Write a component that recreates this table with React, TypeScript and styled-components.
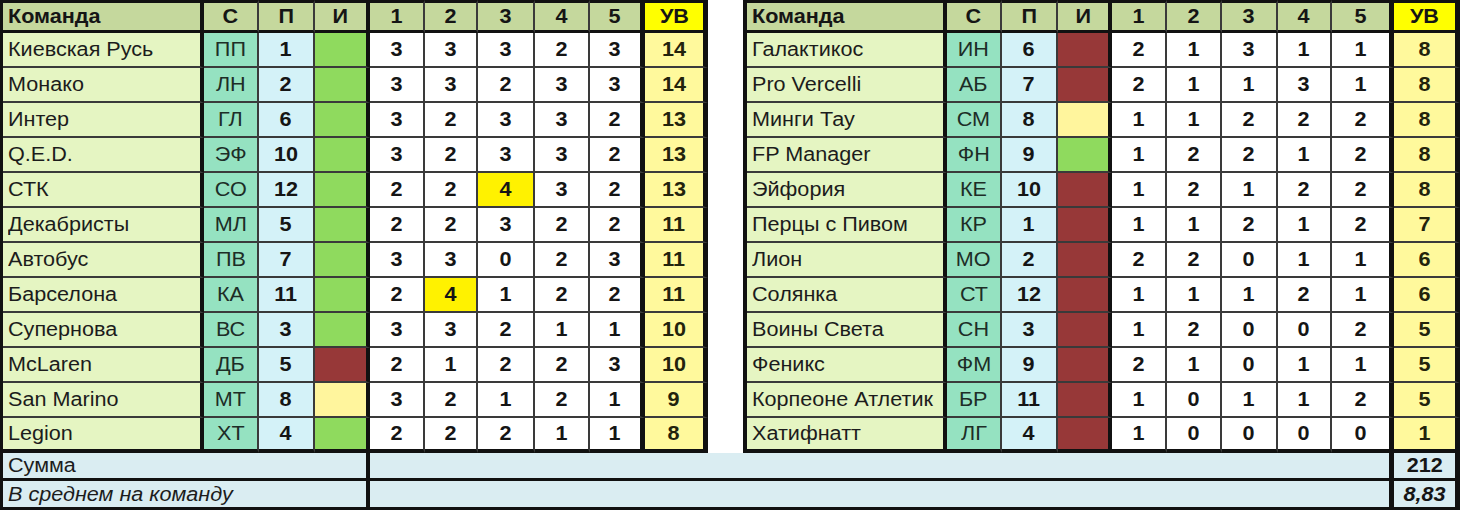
import React from "react";
import styled, { createGlobalStyle } from "styled-components";

const GlobalStyle = createGlobalStyle`
  html, body { margin: 0; padding: 0; background: #ffffff; }
  body { font-family: "Liberation Sans", Arial, sans-serif; }
`;

const THICK = "#111111";
const THIN = "#3a3a3a";

const COLS = [201, 55, 56, 55, 55, 53, 57, 55, 55, 63, 39, 200, 55, 56, 54, 55, 55, 56, 54, 62, 66];
const RB = [4, 2, 2, 4, 2, 2, 2, 2, 5, 5, 4, 4, 2, 2, 4, 2, 2, 2, 2, 5, 5];

type Status = "g" | "r" | "y";
type Team = { name: string; code: string; place: number; status: Status; scores: number[]; hl?: number };

const LEFT: Team[] = [
  { name: "Киевская Русь", code: "ПП", place: 1, status: "g", scores: [3, 3, 3, 2, 3] },
  { name: "Монако", code: "ЛН", place: 2, status: "g", scores: [3, 3, 2, 3, 3] },
  { name: "Интер", code: "ГЛ", place: 6, status: "g", scores: [3, 2, 3, 3, 2] },
  { name: "Q.E.D.", code: "ЭФ", place: 10, status: "g", scores: [3, 2, 3, 3, 2] },
  { name: "СТК", code: "СО", place: 12, status: "g", scores: [2, 2, 4, 3, 2], hl: 2 },
  { name: "Декабристы", code: "МЛ", place: 5, status: "g", scores: [2, 2, 3, 2, 2] },
  { name: "Автобус", code: "ПВ", place: 7, status: "g", scores: [3, 3, 0, 2, 3] },
  { name: "Барселона", code: "КА", place: 11, status: "g", scores: [2, 4, 1, 2, 2], hl: 1 },
  { name: "Супернова", code: "ВС", place: 3, status: "g", scores: [3, 3, 2, 1, 1] },
  { name: "McLaren", code: "ДБ", place: 5, status: "r", scores: [2, 1, 2, 2, 3] },
  { name: "San Marino", code: "МТ", place: 8, status: "y", scores: [3, 2, 1, 2, 1] },
  { name: "Legion", code: "ХТ", place: 4, status: "g", scores: [2, 2, 2, 1, 1] },
];

const RIGHT: Team[] = [
  { name: "Галактикос", code: "ИН", place: 6, status: "r", scores: [2, 1, 3, 1, 1] },
  { name: "Pro Vercelli", code: "АБ", place: 7, status: "r", scores: [2, 1, 1, 3, 1] },
  { name: "Минги Тау", code: "СМ", place: 8, status: "y", scores: [1, 1, 2, 2, 2] },
  { name: "FP Manager", code: "ФН", place: 9, status: "g", scores: [1, 2, 2, 1, 2] },
  { name: "Эйфория", code: "КЕ", place: 10, status: "r", scores: [1, 2, 1, 2, 2] },
  { name: "Перцы с Пивом", code: "КР", place: 1, status: "r", scores: [1, 1, 2, 1, 2] },
  { name: "Лион", code: "МО", place: 2, status: "r", scores: [2, 2, 0, 1, 1] },
  { name: "Солянка", code: "СТ", place: 12, status: "r", scores: [1, 1, 1, 2, 1] },
  { name: "Воины Света", code: "СН", place: 3, status: "r", scores: [1, 2, 0, 0, 2] },
  { name: "Феникс", code: "ФМ", place: 9, status: "r", scores: [2, 1, 0, 1, 1] },
  { name: "Корпеоне Атлетик", code: "БР", place: 11, status: "r", scores: [1, 0, 1, 1, 2] },
  { name: "Хатифнатт", code: "ЛГ", place: 4, status: "r", scores: [1, 0, 0, 0, 0] },
];

const STATUS_BG: Record<Status, string> = { g: "#8fda5e", r: "#973838", y: "#fff59d" };

const Sheet = styled.div`
  width: 1460px;
  height: 510px;
  box-sizing: border-box;
  border-left: 3px solid ${THICK};
  display: grid;
  grid-template-columns: ${COLS.map((c) => `${c}px`).join(" ")};
  grid-template-rows: 33px repeat(12, 35px) 28px 29px;
  overflow: hidden;
`;

const Base = styled.div<{ $r: number; $b: number; $t?: number }>`
  box-sizing: border-box;
  display: flex;
  align-items: center;
  justify-content: center;
  overflow: hidden;
  white-space: nowrap;
  color: #151515;
  font-size: 20px;
  border-right: ${(p) => p.$r}px solid ${(p) => (p.$r > 2 ? THICK : THIN)};
  border-bottom: ${(p) => p.$b}px solid ${(p) => (p.$b > 2 ? THICK : THIN)};
  border-top: ${(p) => p.$t ?? 0}px solid ${THICK};
`;

const Txt = styled.span<{ $origin?: string }>`
  display: inline-block;
  transform: scaleX(1.08);
  transform-origin: ${(p) => p.$origin ?? "center"};
`;

const HeadCell = styled(Base)<{ $yellow?: boolean; $left?: boolean }>`
  background: ${(p) => (p.$yellow ? "#ffff00" : "#c5d89d")};
  font-weight: bold;
  justify-content: ${(p) => (p.$left ? "flex-start" : "center")};
  padding-left: ${(p) => (p.$left ? "5px" : "0")};
`;

const Gap = styled(Base)`
  background: #ffffff;
`;

const NameCell = styled(Base)`
  background: #e5f5c2;
  justify-content: flex-start;
  padding-left: 5px;
  color: #1c1c1c;
`;

const CodeCell = styled(Base)`
  background: #95e2c1;
  color: #1d2d27;
`;

const PlaceCell = styled(Base)`
  background: #d4f2f8;
  font-weight: bold;
`;

const StatusCell = styled(Base)<{ $status: Status }>`
  background: ${(p) => STATUS_BG[p.$status]};
`;

const ScoreCell = styled(Base)<{ $hl?: boolean }>`
  background: ${(p) => (p.$hl ? "#fff200" : "#ffffff")};
  font-weight: bold;
`;

const TotalCell = styled(Base)`
  background: #fff99c;
  font-weight: bold;
  color: #23230c;
`;

const SummaryLabel = styled(Base)<{ $italic?: boolean }>`
  grid-column: span 4;
  background: #daedf2;
  justify-content: flex-start;
  padding-left: 5px;
  font-style: ${(p) => (p.$italic ? "italic" : "normal")};
  color: #1c1c1c;
`;

const SummaryFill = styled(Base)`
  grid-column: span 16;
  background: #daedf2;
`;

const SummaryValue = styled(Base)<{ $italic?: boolean }>`
  background: #daedf2;
  font-weight: bold;
  font-style: ${(p) => (p.$italic ? "italic" : "normal")};
`;

const HEAD = ["Команда", "С", "П", "И", "1", "2", "3", "4", "5", "УВ"];

function headCells(offset: number) {
  return HEAD.map((h, i) => (
    <HeadCell key={`h${offset}-${i}`} $r={RB[offset + i]} $b={3} $t={3} $yellow={h === "УВ"} $left={i === 0}>
      <Txt $origin={i === 0 ? "left" : "center"}>{h}</Txt>
    </HeadCell>
  ));
}

function teamCells(t: Team, offset: number, b: number, key: string) {
  const cells: React.ReactNode[] = [];
  cells.push(
    <NameCell key={`${key}n`} $r={RB[offset]} $b={b}>
      <Txt $origin="left">{t.name}</Txt>
    </NameCell>
  );
  cells.push(
    <CodeCell key={`${key}c`} $r={RB[offset + 1]} $b={b}>
      <Txt>{t.code}</Txt>
    </CodeCell>
  );
  cells.push(
    <PlaceCell key={`${key}p`} $r={RB[offset + 2]} $b={b}>
      <Txt>{t.place}</Txt>
    </PlaceCell>
  );
  cells.push(<StatusCell key={`${key}s`} $r={RB[offset + 3]} $b={b} $status={t.status} />);
  t.scores.forEach((s, i) => {
    cells.push(
      <ScoreCell key={`${key}x${i}`} $r={RB[offset + 4 + i]} $b={b} $hl={t.hl === i}>
        <Txt>{s}</Txt>
      </ScoreCell>
    );
  });
  const total = t.scores.reduce((a, v) => a + v, 0);
  cells.push(
    <TotalCell key={`${key}t`} $r={RB[offset + 9]} $b={b}>
      <Txt>{total}</Txt>
    </TotalCell>
  );
  return cells;
}

export default function App() {
  const all = [...LEFT, ...RIGHT];
  const sum = all.reduce((a, t) => a + t.scores.reduce((x, y) => x + y, 0), 0);
  const avg = (sum / all.length).toFixed(2).replace(".", ",");

  return (
    <>
      <GlobalStyle />
      <Sheet>
        {headCells(0)}
        <Gap $r={RB[10]} $b={0} />
        {headCells(11)}
        {LEFT.map((t, r) => {
          const b = r === LEFT.length - 1 ? 4 : 2;
          return (
            <React.Fragment key={`row${r}`}>
              {teamCells(t, 0, b, `l${r}`)}
              <Gap $r={RB[10]} $b={0} />
              {teamCells(RIGHT[r], 11, b, `r${r}`)}
            </React.Fragment>
          );
        })}
        <SummaryLabel $r={4} $b={3}>
          <Txt $origin="left">Сумма</Txt>
        </SummaryLabel>
        <SummaryFill $r={5} $b={3} />
        <SummaryValue $r={5} $b={3}>
          <Txt>{sum}</Txt>
        </SummaryValue>
        <SummaryLabel $r={4} $b={3} $italic>
          <Txt $origin="left">В среднем на команду</Txt>
        </SummaryLabel>
        <SummaryFill $r={5} $b={3} />
        <SummaryValue $r={5} $b={3} $italic>
          <Txt>{avg}</Txt>
        </SummaryValue>
      </Sheet>
    </>
  );
}
